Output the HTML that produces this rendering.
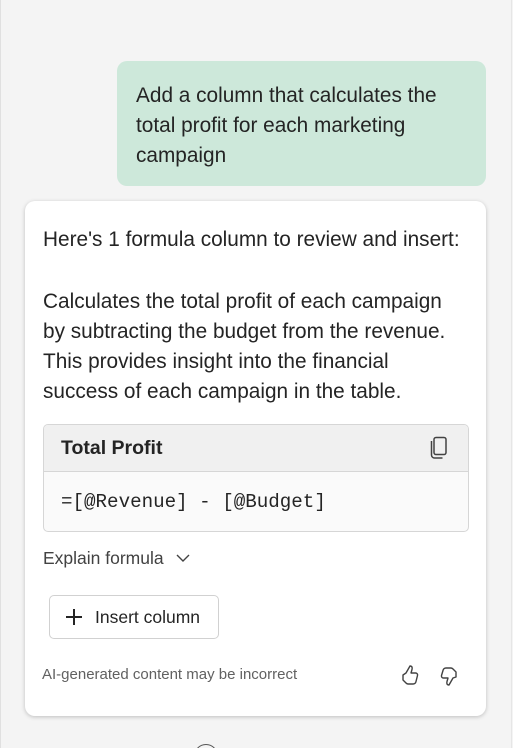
<!DOCTYPE html>
<html><head><style>
*{margin:0;padding:0;box-sizing:border-box}
html,body{width:513px;height:748px;overflow:hidden}
body{background:#f4f4f4;font-family:"Liberation Sans",sans-serif;color:#242424;position:relative}
.lb{position:absolute;left:0;top:0;width:1px;height:748px;background:#e0e0e0}
.rb{position:absolute;right:1px;top:0;width:1px;height:748px;background:#e6e6e6}
.user{position:absolute;left:117px;top:61px;width:369px;height:125px;background:#cde8da;border-radius:10px;padding:20px 0 0 19px;font-size:20.8px;line-height:30px;white-space:nowrap}
.card{position:absolute;left:25px;top:201px;width:461px;height:515px;background:#fff;border-radius:10px;box-shadow:0 1px 4px rgba(0,0,0,.22)}
.t{position:absolute;left:18px;font-size:20.8px;line-height:30px;white-space:nowrap}
.fb{position:absolute;left:18px;top:223px;width:426px;height:108px;border:1px solid #d6d6d6;border-radius:5px;overflow:hidden;background:#fafafa}
.fh{height:47px;background:#f0f0f0;border-bottom:1px solid #d6d6d6;font-weight:bold;font-size:19.5px;line-height:47px;padding-left:17px;position:relative}
.fm{font-family:"Liberation Mono",monospace;font-size:19.2px;padding:19px 0 0 17px;color:#242424}
.ex{position:absolute;left:18px;top:347px;font-size:17.5px;color:#424242}
.btn{position:absolute;left:24px;top:394px;width:170px;height:44px;border:1px solid #d1d1d1;border-radius:5px;font-size:17.5px;line-height:42px;padding-left:45px;color:#242424}
.ft{position:absolute;left:17px;top:465px;font-size:15px;color:#616161}
</style></head><body>
<div class="lb"></div><div class="rb"></div>
<div class="user">Add a column that calculates the<br>total profit for each marketing<br>campaign</div>
<div class="card">
<div class="t" style="top:24px">Here's 1 formula column to review and insert:</div>
<div class="t" style="top:86px">Calculates the total profit of each campaign<br>by subtracting the budget from the revenue.<br>This provides insight into the financial<br>success of each campaign in the table.</div>
<div class="fb"><div class="fh">Total Profit
<svg style="position:absolute;left:385px;top:11px" width="20" height="24" viewBox="0 0 20 24" fill="none" stroke="#424242" stroke-width="1.5"><rect x="5" y="1.5" width="12" height="17" rx="2"/><path d="M2.5 5v14a3 3 0 0 0 3 3h8"/></svg></div>
<div class="fm">=[@Revenue] - [@Budget]</div></div>
<div class="ex">Explain formula <svg style="margin-left:8px;vertical-align:1px" width="14" height="9" viewBox="0 0 14 9" fill="none" stroke="#424242" stroke-width="1.4"><path d="M1 1l6 6 6-6"/></svg></div>
<div class="btn"><svg style="position:absolute;left:15px;top:12px" width="18" height="18" viewBox="0 0 18 18" stroke="#242424" stroke-width="2"><path d="M9 1v16M1 9h16"/></svg>Insert column</div>
<div class="ft">AI-generated content may be incorrect</div>
<svg style="position:absolute;left:375px;top:463px" width="20" height="22" viewBox="0 0 20 22" fill="none" stroke="#424242" stroke-width="1.4" stroke-linejoin="round"><path d="M6 9l4-7c2 0 2.5 1.5 2 3.5L11 9h4.5a2 2 0 0 1 2 2.5l-1.5 6a3 3 0 0 1-3 2.5H8a3 3 0 0 1-2-1l-3-3v-5z"/></svg>
<svg style="position:absolute;left:414px;top:464px" width="20" height="22" viewBox="0 0 20 22" fill="none" stroke="#424242" stroke-width="1.4" stroke-linejoin="round"><path d="M14 13l-4 7c-2 0-2.5-1.5-2-3.5L9 13H4.5a2 2 0 0 1-2-2.5l1.5-5a3 3 0 0 1 3-2.5H12a3 3 0 0 1 2 1l3 3v5z"/></svg>
</div>
<div style="position:absolute;left:194px;top:744px;width:24px;height:24px;border:1.5px solid #555;border-radius:50%"></div>
</body></html>
